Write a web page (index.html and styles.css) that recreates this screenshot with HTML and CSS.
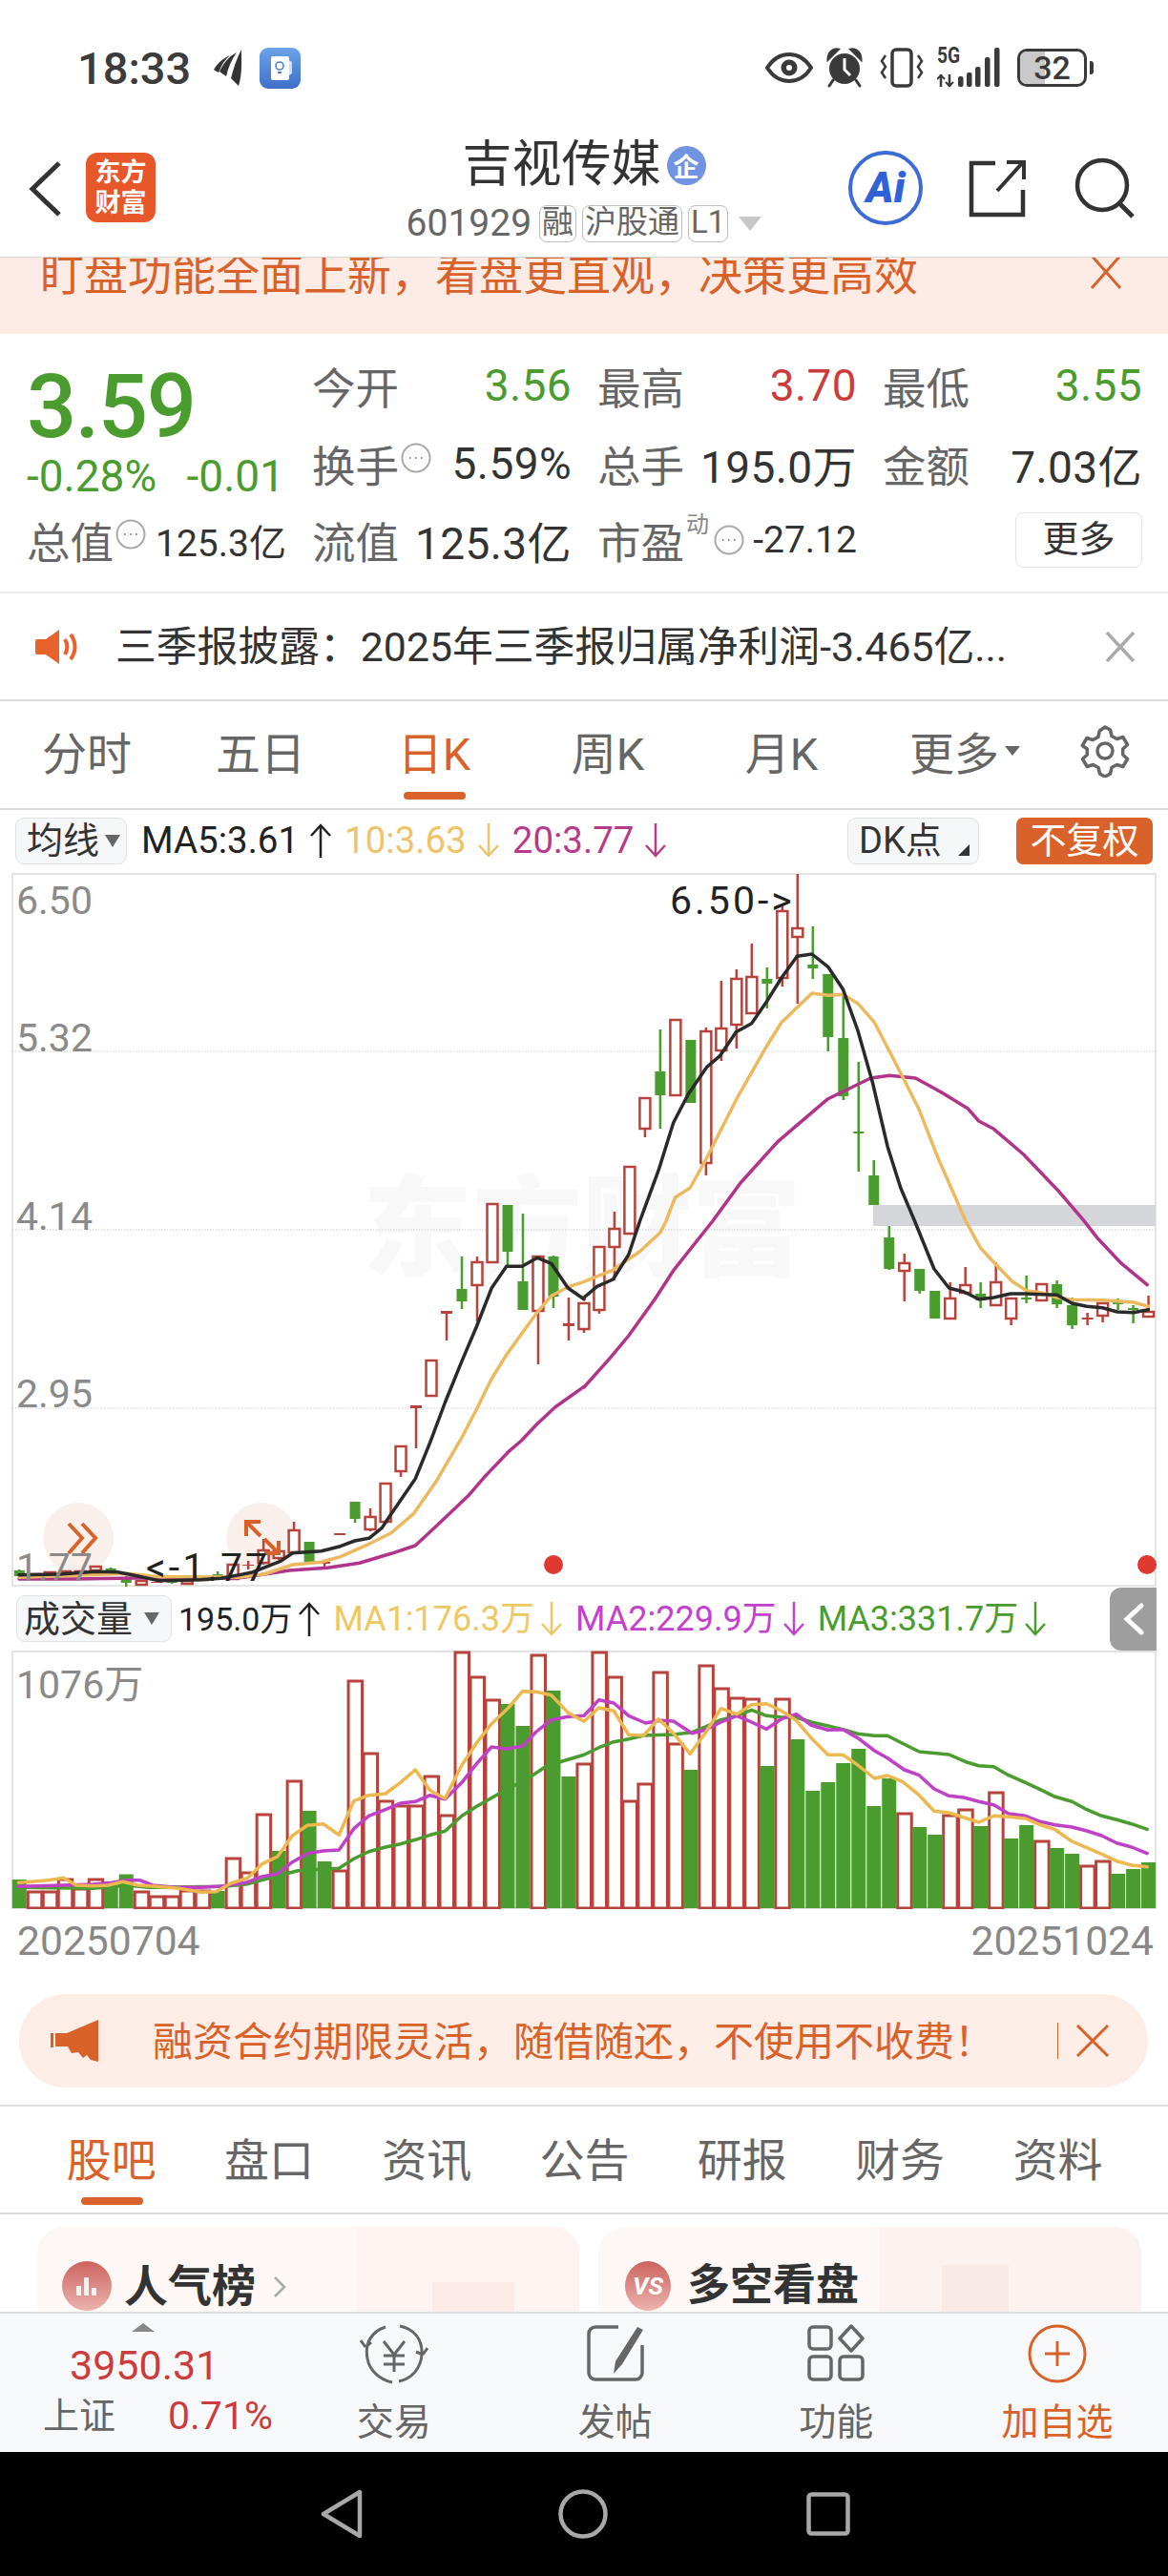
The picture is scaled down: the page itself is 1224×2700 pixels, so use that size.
FILE: index.html
```html
<!DOCTYPE html>
<html lang="zh-CN">
<head>
<meta charset="utf-8">
<title>吉视传媒</title>
<link rel="stylesheet" href="styles.css">
</head>
<body>
<div class="page">
  <header class="status">
    <div class="status-left">
      <span class="time">18:33</span>
      <svg class="ic-plane" viewBox="0 0 30 38"><path d="M29 0C29 12 30 26 26 38L18 30C21 19 24 9 29 0ZM24 3C19 10 15 19 13 28L6 23C10 14 16 7 24 3ZM17 6C10 9 4 14 0 21L5 24C8 16 12 10 17 6Z" fill="#333"/></svg>
      <svg class="ic-app" viewBox="0 0 43 43"><defs><linearGradient id="appg" x1="0" y1="0" x2="0" y2="1"><stop offset="0" stop-color="#6ba3ea"/><stop offset="1" stop-color="#3f6fc9"/></linearGradient></defs><rect width="43" height="43" rx="9" fill="url(#appg)"/><rect x="12" y="9" width="19" height="25" rx="2" fill="#fff"/><circle cx="21" cy="19" r="4" fill="none" stroke="#4a7fd2" stroke-width="1.6"/><path d="M19 26h4" stroke="#4a7fd2" stroke-width="2"/><path d="M31 13l3 2v12l-3 2z" fill="#cfe0f8"/></svg>
    </div>
    <div class="status-right">
      <svg class="ic-eye" viewBox="0 0 50 32"><path d="M2 16C9 5 17 2 25 2s16 3 23 14C41 27 33 30 25 30S9 27 2 16Z" fill="none" stroke="#3a3a3a" stroke-width="4"/><circle cx="25" cy="16" r="8.5" fill="#3a3a3a"/><circle cx="25" cy="16" r="3" fill="#fff"/></svg>
      <svg class="ic-alarm" viewBox="0 0 40 42"><circle cx="20" cy="22" r="16" fill="#3a3a3a"/><path d="M3 12C3 5 8 1 13 2ZM37 12C37 5 32 1 27 2ZM8 34l-4 6M32 34l4 6" fill="#3a3a3a" stroke="#3a3a3a" stroke-width="3" stroke-linecap="round"/><path d="M20 11v12l6 6" fill="none" stroke="#fff" stroke-width="3"/></svg>
      <svg class="ic-vib" viewBox="0 0 46 42"><rect x="13" y="2" width="20" height="38" rx="4" fill="none" stroke="#3a3a3a" stroke-width="3.5"/><path d="M6 8l-4 6 4 6-4 6 4 6M40 8l4 6-4 6 4 6-4 6" fill="none" stroke="#3a3a3a" stroke-width="2.5"/></svg>
      <div class="signal"><span class="five-g">5G</span><svg class="ic-bars" viewBox="0 0 68 42"><path d="M4 28v13M13 28v13" stroke="#3a3a3a" stroke-width="2.5"/><path d="M0 33l4-4 4 4M9 36l4 4 4-4" fill="none" stroke="#3a3a3a" stroke-width="2"/><rect x="22" y="30" width="5.500" height="11" rx="2" fill="#3a3a3a"/><rect x="31" y="26" width="5.500" height="15" rx="2" fill="#3a3a3a"/><rect x="40" y="20" width="5.500" height="21" rx="2" fill="#3a3a3a"/><rect x="50" y="10" width="5.500" height="31" rx="2" fill="#3a3a3a"/><rect x="60" y="0" width="5.500" height="41" rx="2" fill="#3a3a3a"/></svg></div>
      <div class="battery"><div class="battery-body"><span class="battery-fill"></span><span class="battery-num">32</span></div><span class="battery-tip"></span></div>
    </div>
  </header>

  <nav class="topbar">
    <div class="topbar-left">
      <svg class="ic-back" viewBox="0 0 36 60"><path d="M33 3L5 30l28 27" fill="none" stroke="#333" stroke-width="5"/></svg>
      <div class="logo"><span>东方</span><span>财富</span></div>
    </div>
    <div class="title-block">
      <div class="title-row"><span class="title">吉视传媒</span><span class="ent-badge">企</span></div>
      <div class="sub-row"><span class="code">601929</span><span class="tag">融</span><span class="tag">沪股通</span><span class="tag">L1</span><span class="tag-arrow"></span></div>
    </div>
    <div class="topbar-right">
      <div class="ai-btn"><span class="ai-text">Ai</span></div>
      <svg class="ic-share" viewBox="0 0 62 62"><path d="M28 5H3v54h54V33" fill="none" stroke="#333" stroke-width="4.5"/><path d="M30 34L57 4M40 4h18v18" fill="none" stroke="#333" stroke-width="4"/></svg>
      <svg class="ic-search" viewBox="0 0 64 64"><circle cx="29" cy="29" r="26" fill="none" stroke="#333" stroke-width="4.5"/><path d="M47 48l14 14" stroke="#333" stroke-width="5"/></svg>
    </div>
  </nav>

  <section class="promo">
    <span class="promo-text">盯盘功能全面上新，看盘更直观，决策更高效</span>
    <svg class="promo-x" viewBox="0 0 34 36"><path d="M2 0l30 34M32 0L2 34" stroke="#d9622b" stroke-width="3"/></svg>
  </section>

  <section class="quote">
    <div class="q-price">3.59</div>
    <div class="q-cell"><span class="lbl">今开</span><span class="val green">3.56</span></div>
    <div class="q-cell"><span class="lbl">最高</span><span class="val red">3.70</span></div>
    <div class="q-cell"><span class="lbl">最低</span><span class="val green">3.55</span></div>
    <div class="q-change"><span>-0.28%</span><span>-0.01</span></div>
    <div class="q-cell"><span class="lbl">换手<svg class="dots" viewBox="0 0 32 32"><circle cx="16" cy="16" r="14.5" fill="none" stroke="#aaa" stroke-width="2"/><path d="M9 16h1.5M15 16h1.5M21 16h1.5" stroke="#888" stroke-width="2"/></svg></span><span class="val">5.59%</span></div>
    <div class="q-cell"><span class="lbl">总手</span><span class="val">195.0万</span></div>
    <div class="q-cell"><span class="lbl">金额</span><span class="val">7.03亿</span></div>
    <div class="q-cell"><span class="lbl">总值<svg class="dots" viewBox="0 0 32 32"><circle cx="16" cy="16" r="14.5" fill="none" stroke="#aaa" stroke-width="2"/><path d="M9 16h1.5M15 16h1.5M21 16h1.5" stroke="#888" stroke-width="2"/></svg></span><span class="val small">125.3亿</span></div>
    <div class="q-cell"><span class="lbl">流值</span><span class="val">125.3亿</span></div>
    <div class="q-cell"><span class="lbl">市盈<sup class="dyn">动</sup><svg class="dots dots-pe" viewBox="0 0 32 32"><circle cx="16" cy="16" r="14.5" fill="none" stroke="#aaa" stroke-width="2"/><path d="M9 16h1.5M15 16h1.5M21 16h1.5" stroke="#888" stroke-width="2"/></svg></span><span class="val small">-27.12</span></div>
    <div class="q-more"><span class="more-btn">更多</span></div>
  </section>

  <section class="news">
    <svg class="ic-speaker" viewBox="0 0 48 38"><path d="M2 11h9L25 1v36L11 27H2a2 2 0 0 1-2-2V13a2 2 0 0 1 2-2Z" fill="#e8632b"/><path d="M31 11c3 5 3 11 0 16M37 6c6 8 6 18 0 26" fill="none" stroke="#e8632b" stroke-width="4"/></svg>
    <span class="news-text">三季报披露：2025年三季报归属净利润-3.465亿...</span>
    <svg class="news-x" viewBox="0 0 32 32"><path d="M2 1l28 30M30 1L2 31" stroke="#aaa" stroke-width="3.5"/></svg>
  </section>

  <section class="ktabs">
    <span class="ktab">分时</span><span class="ktab">五日</span><span class="ktab active">日K</span><span class="ktab">周K</span><span class="ktab">月K</span>
    <span class="ktab ktab-more">更多<i class="tab-caret"></i></span>
    <span class="ktab"><svg class="ic-gear" viewBox="0 0 56 56"><path d="M28 3l5.500 3 1.500 6.500 5.500 3 6.300-2 4.700 8-4.800 4.500v6l4.800 4.500-4.700 8-6.300-2-5.500 3-1.500 6.500-5.500 3-5.500-3-1.500-6.500-5.500-3-6.300 2-4.700-8 4.800-4.500v-6L4.300 22.500l4.700-8 6.300 2 5.500-3 1.500-6.500z" fill="none" stroke="#666" stroke-width="3.500" stroke-linejoin="round"/><circle cx="28" cy="28" r="8" fill="none" stroke="#666" stroke-width="3.500"/></svg></span>
  </section>

  <section class="ma-row">
    <span class="select ma-select">均线<i class="sel-caret"></i></span>
    <span class="ma ma-black">MA5:3.61<svg class="arrow" viewBox="0 0 24 36"><path d="M12 36V2M2 13L12 2l10 11"/></svg></span>
    <span class="ma ma-yellow">10:3.63<svg class="arrow" viewBox="0 0 24 36"><path d="M12 0v34M2 23l10 11 10-11"/></svg></span>
    <span class="ma ma-pink">20:3.77<svg class="arrow" viewBox="0 0 24 36"><path d="M12 0v34M2 23l10 11 10-11"/></svg></span>
    <span class="select dk-select">DK点<i class="dk-corner"></i></span>
    <span class="unadjust">不复权</span>
  </section>

  <section class="price-chart">
    <div class="watermark">东方财富</div>
    <svg class="chart-svg" viewBox="12 915 1200 748" preserveAspectRatio="none">
      <rect x="915" y="1263" width="296" height="22" fill="#d5d6da"/>
      <g stroke="#cfcfcf" stroke-width="1" stroke-dasharray="1.500 1.500"><path d="M13 1102H1211M13 1289H1211M13 1476H1211"/></g>
      <circle cx="82" cy="1612" r="37" fill="#faf0eb"/>
      <circle cx="274" cy="1612" r="37" fill="#faf0eb"/>
      <g id="candles"></g>
      <g id="price-lines"></g>
      <g fill="none" stroke="#d9622b" stroke-width="4">
        <path d="M72 1597l14 15-14 16M86 1597l14 15-14 16"/>
        <path d="M273 1595h-15v15M258 1595l15 15M292 1615v13h-15M277 1613l15 15"/>
      </g>
      <circle cx="580" cy="1640" r="10" fill="#e0392f"/>
      <circle cx="1202" cy="1640" r="10" fill="#e0392f"/>
    </svg>
    <span class="axis ax1">6.50</span>
    <span class="axis ax2">5.32</span>
    <span class="axis ax3">4.14</span>
    <span class="axis ax4">2.95</span>
    <span class="axis ax5">1.77</span>
    <span class="mark mark-high">6.50-&gt;</span>
    <span class="mark mark-low">&lt;-1.77</span>
  </section>

  <section class="vol-row">
    <span class="select vol-select">成交量<i class="sel-caret"></i></span>
    <span class="ma ma-black">195.0万<svg class="arrow" viewBox="0 0 24 36"><path d="M12 36V2M2 13L12 2l10 11"/></svg></span>
    <span class="ma ma1">MA1:176.3万<svg class="arrow" viewBox="0 0 24 36"><path d="M12 0v34M2 23l10 11 10-11"/></svg></span>
    <span class="ma ma2">MA2:229.9万<svg class="arrow" viewBox="0 0 24 36"><path d="M12 0v34M2 23l10 11 10-11"/></svg></span>
    <span class="ma ma3">MA3:331.7万<svg class="arrow" viewBox="0 0 24 36"><path d="M12 0v34M2 23l10 11 10-11"/></svg></span>
    <div class="side-tab"><svg viewBox="0 0 24 36"><path d="M20 4L5 18l15 14" fill="none" stroke="#fff" stroke-width="5" stroke-linecap="round"/></svg></div>
  </section>

  <section class="vol-chart">
    <svg class="chart-svg" viewBox="12 1730 1200 271" preserveAspectRatio="none">
      <g id="vol-bars"></g>
      <g id="vol-lines"></g>
    </svg>
    <span class="axis vol-max">1076万</span>
  </section>

  <section class="dates"><span>20250704</span><span>20251024</span></section>

  <section class="pill-wrap">
    <div class="pill">
      <svg class="ic-horn" viewBox="0 0 50 44"><path d="M50 0v44l-8-2-4-5-4 3-5-6-7 1-4-7H5V14h12Z" fill="#d9622b"/><rect x="0" y="14" width="3" height="15" fill="#d9622b"/></svg>
      <span class="pill-text">融资合约期限灵活，随借随还，不使用不收费！</span>
      <i class="pill-sep"></i>
      <svg class="pill-x" viewBox="0 0 36 34"><path d="M2 1l32 32M34 1L2 33" stroke="#d9622b" stroke-width="3"/></svg>
    </div>
  </section>

  <section class="subtabs">
    <span class="subtab active">股吧</span><span class="subtab">盘口</span><span class="subtab">资讯</span><span class="subtab">公告</span><span class="subtab">研报</span><span class="subtab">财务</span><span class="subtab">资料</span>
  </section>

  <section class="cards">
    <div class="card card-a">
      <span class="card-ic"><svg viewBox="0 0 28 24"><path d="M3 22V12h5v10zM11 22V3h5v19zM19 22v-8h5v8z" fill="#fff" fill-opacity=".85"/></svg></span>
      <span class="card-title">人气榜</span>
      <svg class="card-arrow" viewBox="0 0 14 24"><path d="M2 2l10 10L2 22" fill="none" stroke="#aaa" stroke-width="2.500"/></svg>
    </div>
    <div class="card card-b">
      <span class="card-ic vs">VS</span>
      <span class="card-title">多空看盘</span>
    </div>
  </section>

  <footer class="bottombar">
    <div class="index-cell">
      <i class="index-caret"></i>
      <span class="index-val">3950.31</span>
      <div class="index-row"><span class="index-name">上证</span><span class="index-pct">0.71%</span></div>
    </div>
    <div class="btab">
      <svg class="btab-ic" viewBox="0 0 72 64"><path d="M27 3C12 8 5 20 8 36c2 12 12 22 26 25M6 24L1 17M6 24l6-5M42 2c15 3 24 14 23 30-1 14-10 25-24 28M66 32l5-7M66 32l-7-3" fill="none" stroke="#666" stroke-width="3"/><path d="M25 18l11 14 11-14M36 32v18M25 33h22M25 42h22" fill="none" stroke="#666" stroke-width="3"/></svg>
      <span>交易</span>
    </div>
    <div class="btab">
      <svg class="btab-ic" viewBox="0 0 60 60"><path d="M33 3H9a7 7 0 0 0-7 7v41a7 7 0 0 0 7 7h42a7 7 0 0 0 7-7V22" fill="none" stroke="#666" stroke-width="3.500"/><path d="M53 3l6 3-22 36-9 10 2-13z" fill="#666"/></svg>
      <span>发帖</span>
    </div>
    <div class="btab">
      <svg class="btab-ic" viewBox="0 0 60 60"><rect x="2" y="3" width="23" height="23" rx="4" fill="none" stroke="#666" stroke-width="3.500"/><rect x="2" y="34" width="23" height="24" rx="4" fill="none" stroke="#666" stroke-width="3.500"/><rect x="34" y="34" width="24" height="24" rx="4" fill="none" stroke="#666" stroke-width="3.500"/><path d="M46 2l12 13-12 13-12-13z" fill="none" stroke="#666" stroke-width="3.500" stroke-linejoin="round"/></svg>
      <span>功能</span>
    </div>
    <div class="btab btab-add">
      <svg class="btab-ic" viewBox="0 0 62 62"><circle cx="31" cy="31" r="29" fill="none" stroke="#d9622b" stroke-width="3"/><path d="M31 18v26M18 31h26" stroke="#d9622b" stroke-width="3"/></svg>
      <span>加自选</span>
    </div>
  </footer>

  <div class="sysnav">
    <svg class="sys-back" viewBox="0 0 46 52"><path d="M42 3v46L4 26z" fill="none" stroke="#a8a8a8" stroke-width="4.500" stroke-linejoin="round"/></svg>
    <svg class="sys-home" viewBox="0 0 52 52"><circle cx="26" cy="26" r="23.500" fill="none" stroke="#a8a8a8" stroke-width="4.500"/></svg>
    <svg class="sys-recent" viewBox="0 0 46 46"><rect x="2.500" y="2.500" width="41" height="41" rx="3" fill="none" stroke="#a8a8a8" stroke-width="4.500"/></svg>
  </div>
</div>
<script src="chart.js"></script>
</body>
</html>
```

FILE: styles.css
```css
* { box-sizing: border-box; }
html, body { margin: 0; padding: 0; background: #fff; }
body { font-family: Roboto, "Noto Sans CJK SC", sans-serif; color: #333; }
i { font-style: normal; }
svg { display: block; flex: none; }
.page { width: 1224px; height: 2700px; overflow: hidden; display: flex; flex-direction: column; }
.page > * { flex: none; }

/* status bar */
.status { height: 142px; padding: 0 78px 0 81px; display: flex; align-items: center; justify-content: space-between; }
.status-left, .status-right { display: flex; align-items: center; }
.time { font-size: 47px; font-weight: 500; color: #3c3c3c; }
.ic-plane { width: 30px; height: 38px; margin-left: 24px; }
.ic-app { width: 43px; height: 43px; margin-left: 18px; }
.ic-eye { width: 50px; height: 32px; }
.ic-alarm { width: 40px; height: 42px; margin-left: 13px; }
.ic-vib { width: 46px; height: 42px; margin-left: 17px; }
.signal { position: relative; width: 68px; height: 42px; margin-left: 14px; }
.five-g { position: absolute; left: 0; top: -4px; font-size: 24px; font-weight: 700; line-height: 24px; color: #3a3a3a; transform: scaleX(.8); transform-origin: left; }
.ic-bars { width: 68px; height: 42px; }
.battery { display: flex; align-items: center; margin-left: 16px; }
.battery-body { position: relative; width: 73px; height: 40px; border: 3.500px solid #3a3a3a; border-radius: 10px; overflow: hidden; display: flex; align-items: center; justify-content: center; }
.battery-fill { position: absolute; left: 0; top: 0; bottom: 0; width: 26px; background: #c9c9c9; }
.battery-num { position: relative; font-size: 34px; font-weight: 500; color: #3a3a3a; }
.battery-tip { width: 4px; height: 14px; margin-left: 3px; background: #3a3a3a; border-radius: 0 3px 3px 0; }

/* nav */
.topbar { height: 128px; border-bottom: 1px solid #d8d8d8; display: grid; grid-template-columns: 1fr auto 1fr; position: relative; }
.topbar-left { display: flex; align-items: flex-start; padding: 18px 0 0 29px; }
.ic-back { width: 36px; height: 60px; margin-top: 8px; }
.logo { width: 73px; height: 73px; margin-left: 25px; background: #e8572a; border-radius: 12px; color: #fff; font-size: 27px; font-weight: 700; line-height: 32px; display: flex; flex-direction: column; align-items: center; justify-content: center; }
.title-block { display: flex; flex-direction: column; align-items: center; padding-top: 2px; }
.title-row { display: flex; align-items: center; height: 58px; }
.title { font-size: 52px; line-height: 58px; color: #333; }
.ent-badge { width: 41px; height: 41px; margin-left: 6px; border-radius: 50%; background: #7093e2; color: #fff; font-size: 27px; font-weight: 700; display: flex; align-items: center; justify-content: center; }
.sub-row { display: flex; align-items: center; height: 40px; margin-top: 12px; }
.code { font-size: 39px; line-height: 40px; color: #666; margin-right: 8px; }
.tag { height: 39px; padding: 0 2px; margin-right: 6px; border: 1.500px solid #bdbdbd; border-radius: 8px; font-size: 33px; line-height: 34px; color: #666; }
.tag-arrow { width: 0; height: 0; margin: 0 0 0 5px; border-left: 12px solid transparent; border-right: 12px solid transparent; border-top: 15px solid #c8c8c8; }
.topbar-right { display: flex; align-items: flex-start; justify-content: flex-end; padding: 16px 34px 0 0; }
.ai-btn { width: 78px; height: 78px; border: 4px solid #3c6bd8; border-radius: 50%; display: flex; align-items: center; justify-content: center; }
.ai-text { font-size: 44px; font-weight: 900; font-style: italic; color: #2f62d6; }
.ic-share { width: 62px; height: 62px; margin: 8px 0 0 48px; }
.ic-search { width: 64px; height: 64px; margin: 7px 0 0 49px; }

/* promo */
.promo { height: 80px; background: #fcece5; overflow: hidden; position: relative; display: flex; align-items: flex-start; justify-content: space-between; padding: 0 48px 0 42px; }
.promo-text { font-size: 46px; line-height: 36px; color: #d9622b; }
.promo-x { width: 34px; height: 36px; margin-top: -2px; }

/* quote */
.quote { height: 272px; border-bottom: 2px solid #ececec; padding: 14px 27px 0 28px; display: grid; grid-template-columns: 272px 272px 272px 272px; column-gap: 27px; grid-template-rows: 80px 84px 76px; }
.q-cell { display: flex; align-items: center; justify-content: space-between; white-space: nowrap; }
.q-price { font-size: 92px; font-weight: 500; line-height: 80px; color: #4a9c2f; padding-top: 23px; letter-spacing: -1.500px; }
.q-change { display: flex; justify-content: space-between; align-items: center; padding: 26px 2px 0 0; font-size: 46px; color: #4a9c2f; }
.lbl { font-size: 45.500px; color: #666; display: flex; align-items: center; position: relative; }
.val { font-size: 46px; letter-spacing: .4px; color: #333; }
.val.small { font-size: 39px; letter-spacing: 0; }
.green { color: #4a9c2f; }
.red { color: #cc3c3c; }
.dots { width: 32px; height: 32px; margin: -12px 0 0 2px; }
.dots-pe { margin-top: 0; }
.dyn { font-size: 24px; line-height: 24px; color: #888; margin: -32px 3px 0 2px; }
.q-more { display: flex; justify-content: flex-end; align-items: center; }
.more-btn { width: 133px; height: 58px; border: 1.500px solid #e5e5e5; border-radius: 8px; font-size: 38px; line-height: 54px; text-align: center; color: #333; }

/* news */
.news { height: 113px; border-bottom: 2px solid #dedede; padding: 0 34px 0 37px; display: flex; align-items: center; }
.ic-speaker { width: 48px; height: 38px; }
.news-text { flex: 1; margin-left: 36px; padding-bottom: 7px; font-size: 42.800px; color: #333; white-space: nowrap; }
.news-x { width: 32px; height: 32px; }

/* kline tabs */
.ktabs { height: 114px; border-bottom: 2px solid #dedede; display: grid; grid-template-columns: repeat(6, 182px) 132px; }
.ktab { display: flex; align-items: center; justify-content: center; height: 112px; padding-bottom: 9px; font-size: 47px; color: #666; position: relative; }
.ktab.active { color: #d9622b; }
.ktab.active::after { content: ""; position: absolute; left: 59px; width: 65px; bottom: 9px; height: 8px; border-radius: 4px; background: #d9622b; }
.ktab-more { padding-left: 20px; }
.tab-caret { width: 0; height: 0; margin-left: 6px; border-left: 8px solid transparent; border-right: 8px solid transparent; border-top: 10px solid #666; }
.ic-gear { width: 56px; height: 56px; }

/* legend rows */
.ma-row, .vol-row { display: flex; align-items: center; position: relative; white-space: nowrap; }
.ma-row { height: 66px; padding: 0 16px 2px 16px; }
.vol-row { height: 67px; padding: 0 16px 0 17px; }
.select { height: 49px; border: 1.500px solid #e2e2e2; border-radius: 9px; background: #f6f7f9; font-size: 38px; line-height: 44px; color: #333; display: flex; align-items: center; }
.ma-select { width: 117px; padding-left: 11px; }
.vol-select { width: 163px; padding-left: 7px; }
.sel-caret { width: 0; height: 0; margin-left: 6px; border-left: 8px solid transparent; border-right: 8px solid transparent; border-top: 13px solid #666; }
.vol-select .sel-caret { margin-left: 12px; }
.ma { font-size: 38.500px; line-height: 48px; display: flex; align-items: center; }
.arrow { width: 24px; height: 36px; margin-left: 11px; fill: none; stroke: currentColor; stroke-width: 2.500; }
.ma-black { color: #222; margin-left: 15px; }
.ma-row .ma-yellow { color: #eec36a; margin-left: 13px; }
.ma-row .ma-pink { color: #b83a8c; margin-left: 13px; }
.dk-select { width: 138px; margin-left: auto; padding-left: 11px; position: relative; }
.dk-corner { position: absolute; right: 9px; bottom: 8px; width: 0; height: 0; border-left: 12px solid transparent; border-bottom: 12px solid #333; }
.unadjust { width: 143px; height: 49px; margin-left: 39px; border-radius: 7px; background: #d9622b; color: #fff; font-size: 38px; line-height: 48px; text-align: center; }
.vol-row .ma { font-size: 36px; }
.vol-row .arrow { margin-left: 6px; }
.vol-row .ma-black { margin-left: 7px; font-size: 34px; }
.ma1 { color: #eec864; margin-left: 13px; }
.ma2 { color: #c441cf; margin-left: 13px; }
.ma3 { color: #4a9c2f; margin-left: 13px; }
.side-tab { position: absolute; left: 1163px; top: 1px; width: 49px; height: 66px; background: #9e9e9e; border-radius: 12px 0 0 12px; display: flex; align-items: center; justify-content: center; }
.side-tab svg { width: 24px; height: 36px; }

/* charts */
.price-chart, .vol-chart { position: relative; margin-left: 12px; width: 1200px; border: 2px solid #e2e2e2; }
.price-chart { height: 748px; border-color: #e4e4e4; }
.vol-chart { height: 271px; border-bottom-color: #dcdcdc; }
.chart-svg { position: absolute; left: -2px; top: -2px; width: 1200px; }
.price-chart .chart-svg { height: 748px; }
.vol-chart .chart-svg { height: 271px; }
.watermark { position: absolute; left: 366px; top: 307px; font-size: 115px; line-height: 130px; font-weight: 900; color: #f8f8f8; white-space: nowrap; }
.axis { position: absolute; left: 3px; font-size: 41px; line-height: 40px; color: #8a8a8a; }
.ax1 { top: 7px; }
.ax2 { top: 151px; }
.ax3 { top: 338px; }
.ax4 { top: 524px; }
.ax5 { top: 708px; line-height: 36px; }
.mark { position: absolute; font-size: 41px; line-height: 40px; color: #222; letter-spacing: 3px; }
.mark-high { left: 688px; top: 7px; }
.mark-low { left: 139px; top: 708px; line-height: 36px; }
.vol-max { top: 14px; }

.dates { height: 69px; padding: 0 15px 4px 18px; display: flex; align-items: center; justify-content: space-between; font-size: 42.600px; color: #888; }

/* pill */
.pill-wrap { height: 138px; border-bottom: 2px solid #dedede; padding: 20px 21px 0 20px; }
.pill { height: 98px; border-radius: 49px; background: #fcede6; display: flex; align-items: center; padding: 0 40px 0 33px; }
.ic-horn { width: 50px; height: 44px; }
.pill-text { margin-left: 57px; padding-bottom: 5px; font-size: 42px; color: #d9622b; white-space: nowrap; flex: 1; }
.pill-sep { width: 1px; height: 38px; background: #d9622b; margin-right: 18px; }
.pill-x { width: 36px; height: 34px; }

/* sub tabs */
.subtabs { height: 113px; border-bottom: 2px solid #dedede; padding: 0 34px; display: grid; grid-template-columns: repeat(7, 165.300px); }
.subtab { display: flex; align-items: center; justify-content: center; height: 111px; padding-bottom: 6px; font-size: 47px; color: #666; position: relative; }
.subtab.active { color: #d9622b; }
.subtab.active::after { content: ""; position: absolute; left: 51px; width: 65px; bottom: 8px; height: 8px; border-radius: 4px; background: #d9622b; }

/* cards */
.cards { height: 102px; padding: 13px 28px 0 39px; display: grid; grid-template-columns: 568px 569px; column-gap: 20px; overflow: hidden; }
.card { height: 130px; border-radius: 28px; display: flex; align-items: flex-start; padding: 36px 0 0 26px; position: relative; overflow: hidden; background: #fdf8f6; }
.card > * { position: relative; }
.card::before { content: ""; position: absolute; left: 336px; top: 0; width: 232px; height: 130px; background: #fdf4f1; }
.card::after { content: ""; position: absolute; left: 414px; top: 58px; width: 86px; height: 80px; background: #fbeae6; }
.card-b { padding-left: 28px; }
.card-b::before { left: 294px; width: 275px; background: #fcf2ef; }
.card-b::after { left: 360px; top: 40px; width: 70px; height: 90px; background: #faeae6; }
.card-ic { width: 52px; height: 52px; border-radius: 50%; background: linear-gradient(180deg, #cc6360, #ecb3ad); display: flex; align-items: center; justify-content: center; color: #fff; font-size: 26px; font-weight: 700; }
.card-ic svg { width: 28px; height: 24px; }
.card-ic.vs { width: 48px; height: 52px; font-style: italic; }
.card-title { margin-left: 13px; font-size: 46px; line-height: 52px; font-weight: 700; color: #333; }
.card-b .card-title { margin-left: 17px; font-size: 45px; }
.card-arrow { width: 14px; height: 24px; margin: 15px 0 0 18px; }

/* bottom bar */
.bottombar { height: 147px; background: #f7f8fa; border-top: 2px solid #dedede; display: grid; grid-template-columns: 297px repeat(4, 1fr); }
.index-cell { position: relative; display: flex; flex-direction: column; padding: 32px 0 0 45px; }
.index-caret { position: absolute; left: 138px; top: 10px; width: 0; height: 0; border-left: 12px solid transparent; border-right: 12px solid transparent; border-bottom: 9px solid #888; }
.index-val { font-size: 43px; line-height: 44px; color: #cc3c3c; padding-left: 28px; }
.index-row { display: flex; align-items: center; margin-top: 8px; }
.index-name { font-size: 38px; line-height: 46px; color: #666; }
.index-pct { margin-left: 55px; font-size: 41px; line-height: 46px; color: #cc3c3c; }
.btab { display: flex; flex-direction: column; align-items: center; padding-top: 11px; font-size: 39px; line-height: 46px; color: #666; }
.btab-ic { width: 60px; height: 60px; margin-bottom: 20px; }
.btab:nth-child(2) .btab-ic { width: 72px; height: 64px; margin-bottom: 16px; }
.btab-add { color: #d9622b; }
.btab-add .btab-ic { width: 62px; height: 62px; margin-bottom: 18px; }

/* system nav */
.sysnav { height: 130px; background: #000; position: relative; display: flex; align-items: center; padding: 0 0 0 335px; }
.sys-back { width: 46px; height: 52px; }
.sys-home { width: 52px; height: 52px; margin-left: 204px; }
.sys-recent { width: 46px; height: 46px; margin-left: 208px; }
```

FILE: chart.js
```js
var NS = 'http://www.w3.org/2000/svg';
var RED = '#b8423c', GREEN = '#4a9c2f';
function cx(i) { return 20.3 + 15.99 * i; }
function el(parent, name, attrs) {
  var n = document.createElementNS(NS, name);
  for (var k in attrs) n.setAttribute(k, attrs[k]);
  parent.appendChild(n);
  return n;
}

// [colour, bodyTop, bodyBottom, wickTop, wickBottom] in page pixels
var candles = [
  ['g',1646,1652,1645,1653],['r',1650,1652,1650,1652],['r',1648,1652,1648,1652],['r',1647,1650,1647,1651],
  ['r',1647,1650,1646,1651],['r',1642,1646,1642,1646],['g',1644,1647,1643,1648],['g',1653,1659,1652,1663],
  ['r',1657,1661,1657,1661],['d',1658,1659,1658,1659],['g',1657,1659,1656,1660],['r',1657,1660,1657,1660],
  ['r',1655,1656,1655,1656],['g',1650,1653,1647,1654],['r',1640,1655,1640,1655],['d',1640,1641,1636,1645],
  ['r',1625,1638,1613,1640],['r',1626,1633,1615,1635],['r',1604,1627,1595,1627],['g',1616,1637,1616,1640],
  ['d',1637,1639,1635,1642],['d',1607,1609,1607,1609],['g',1574,1592,1574,1596],['r',1590,1603,1581,1605],
  ['r',1555,1595,1555,1596],['r',1516,1542,1516,1548],['d',1473,1476,1473,1518],['r',1426,1463,1426,1463],
  ['d',1374,1377,1374,1405],['g',1351,1364,1317,1372],['r',1323,1347,1317,1385],['r',1262,1323,1262,1323],
  ['g',1263,1312,1263,1327],['g',1343,1373,1272,1373],['r',1317,1374,1316,1430],['g',1317,1359,1316,1371],
  ['d',1387,1390,1360,1405],['r',1366,1393,1366,1397],['r',1307,1373,1307,1377],['r',1288,1307,1270,1342],
  ['r',1223,1293,1223,1293],['r',1151,1183,1151,1192],['g',1123,1148,1079,1183],['r',1069,1148,1069,1148],
  ['g',1090,1156,1090,1156],['r',1081,1219,1077,1232],['r',1078,1101,1028,1112],['r',1026,1074,1016,1099],
  ['r',1024,1062,989,1063],['g',1026,1031,1014,1057],['r',955,1025,948,1034],['r',973,982,916,1052],
  ['g',1011,1015,971,1026],['g',1021,1087,1021,1102],['g',1088,1149,1043,1153],['g',1186,1188,1113,1228],
  ['g',1232,1263,1216,1263],['g',1297,1330,1285,1331],['r',1324,1332,1314,1364],['g',1330,1353,1330,1356],
  ['g',1353,1382,1353,1382],['r',1361,1382,1344,1382],['r',1347,1355,1328,1357],['g',1356,1363,1344,1371],
  ['r',1344,1368,1323,1368],['r',1361,1382,1361,1389],['g',1360,1362,1337,1366],['r',1346,1363,1346,1363],
  ['g',1346,1367,1342,1371],['g',1368,1389,1360,1393],['d',1381,1383,1376,1389],['r',1366,1379,1366,1386],
  ['g',1365,1367,1361,1373],['g',1371,1373,1368,1387],['r',1375,1380,1358,1380]
];
var candleG = document.getElementById('candles');
candles.forEach(function (c, i) {
  var x = cx(i), green = c[0] === 'g', col = green ? GREEN : RED;
  el(candleG, 'line', { x1: x, x2: x, y1: c[3], y2: c[4], stroke: col, 'stroke-width': 2.5 });
  var h = c[2] - c[1];
  if (c[0] === 'd') {
    el(candleG, 'rect', { x: x - 6, y: c[1], width: 12, height: h, fill: col });
  } else if (green) {
    el(candleG, 'rect', { x: x - 5.5, y: c[1], width: 11, height: h, fill: col });
  } else {
    el(candleG, 'rect', { x: x - 5.5, y: c[1], width: 11, height: h, fill: '#fff', stroke: col, 'stroke-width': 2.5 });
  }
});

// Volume: [colour, top]
var vol = [
  ['g',1970],['r',1983],['r',1983],['r',1970],['r',1980],['r',1970],['g',1977],['g',1964.5],['r',1983],['r',1988],
  ['r',1988],['r',1982],['r',1982],['g',1982],['r',1948],['r',1963],['r',1902],['g',1940],['r',1867],['g',1898],
  ['g',1951],['r',1961],['r',1762],['r',1838],['r',1888],['r',1893],['r',1893],['r',1862],['r',1903],['r',1732],
  ['r',1758],['r',1782],['g',1786],['g',1809],['r',1735],['g',1772],['g',1862],['r',1849],['r',1732],['r',1758],
  ['r',1888],['r',1870],['r',1753],['r',1828],['g',1855],['r',1746],['r',1770],['r',1780],['r',1781],['g',1851],
  ['r',1781],['g',1823],['g',1877],['g',1868],['g',1848],['g',1833],['g',1893],['g',1864],['r',1901],['g',1915],
  ['g',1923],['r',1903],['r',1897],['g',1914],['r',1879],['g',1927],['g',1913],['r',1930],['g',1937],['g',1943],
  ['r',1956],['r',1951],['g',1964],['g',1959],['g',1952]
];
var volG = document.getElementById('vol-bars');
vol.forEach(function (b, i) {
  var x = cx(i);
  if (b[0] === 'g') {
    el(volG, 'rect', { x: x - 7.5, y: b[1], width: 15, height: 2000 - b[1], fill: GREEN });
  } else {
    el(volG, 'rect', { x: x - 7, y: b[1], width: 14.5, height: 2000 - b[1], fill: '#fff', stroke: RED, 'stroke-width': 3 });
  }
});

// Moving averages: segments measured against page regions.
var A = { x: 0, y: 1200, s: 2.562, t: 3 }, B = { x: 612, y: 880, s: 2.562, t: 3 },
    C = { x: 612, y: 1280, s: 2.562, t: 3 }, D = { x: 10, y: 1560, s: 3, t: 3 },
    E = { x: 0, y: 1620, s: 2.562, t: 3 }, F = { x: 612, y: 1620, s: 2.562, t: 3 };
function pts(segments) {
  var out = [];
  segments.forEach(function (seg) {
    var r = seg[0], p = seg[1];
    for (var i = 0; i < p.length; i += 2) {
      out.push((r.x + p[i] / r.s).toFixed(1) + ',' + (r.y + p[i + 1] / r.t).toFixed(1));
    }
  });
  return out.join(' ');
}
function line(g, segments, colour, width) {
  el(g, 'polyline', { points: pts(segments), fill: 'none', stroke: colour, 'stroke-width': width, 'stroke-linejoin': 'round', 'stroke-linecap': 'round' });
}
var pl = document.getElementById('price-lines');
line(pl, [
  [D, [30,285,200,285,400,282,600,282,720,282,880,258,1000,250,1100,235,1200,205]],
  [A, [1115,1260,1170,1200,1260,1100,1300,1045,1365,965,1400,930,1440,880,1490,825,1568,760]],
  [C, [0,522,70,430,120,360,190,245,240,155,345,0]],
  [B, [420,1080,520,950,655,815,770,750,820,742,890,750,960,795,1030,845,1060,885,1100,910,1180,990,1270,1100,1340,1195]],
  [C, [1380,55,1440,130,1512,200]]
], '#b2338a', 3.5);
line(pl, [
  [D, [30,280,250,272,370,268,470,278,600,278,720,280,800,270,890,240,980,232,1040,215,1130,175,1200,140]],
  [A, [1110,1160,1170,1060,1240,920,1280,830,1320,735,1360,660,1400,595,1440,530,1480,475,1525,447,1568,430]],
  [C, [0,190,75,155,150,95,205,35,220,0]],
  [B, [245,1125,285,1095,330,1000,410,815,490,650,530,575,612,483,655,490,695,487,735,515,780,575,855,745,900,850,950,1000,1025,1200]],
  [C, [1065,85,1105,135,1150,190,1188,218,1230,225,1270,240,1310,247,1392,248,1475,255,1515,268]]
], '#edb95e', 3.5);
line(pl, [
  [D, [30,272,160,270,270,262,340,263,400,275,470,290,600,287,665,283,760,265,850,230,890,203,980,197,1040,182,1085,165,1130,157,1170,125,1200,80]],
  [A, [1115,1050,1155,935,1195,810,1240,680,1280,570,1320,450,1360,382,1402,382,1443,355,1480,373,1525,450,1568,485]],
  [C, [0,240,35,205,78,183,120,105,150,0]],
  [B, [200,1040,240,890,280,800,330,715,365,680,408,605,450,578,490,510,530,435,572,367,612,360,655,400,695,470,735,600,775,765,815,965,850,1095,888,1200]],
  [C, [940,150,980,210,1020,222,1060,245,1100,240,1145,228,1188,228,1230,230,1270,232,1310,258,1350,268,1392,272,1432,285,1475,287,1515,278]]
], '#2a2a2a', 3.5);

var vl = document.getElementById('vol-lines');
line(vl, [
  [E, [50,1075,250,1078,340,1068,400,1075,600,1072,660,1065,740,1040,800,1022,860,1018,910,1015,950,985,990,962,1035,948,1075,938,1115,925,1155,910,1195,898,1240,850,1280,820,1340,780,1380,755,1420,730,1465,695,1510,678,1568,658]],
  [F, [40,635,80,617,120,608,160,597,240,594,290,587,325,570,368,548,410,535,450,517,490,535,530,540,570,540,610,555,655,567,695,578,735,592,780,598,815,598,860,625,900,648,980,657,1025,680,1060,692,1100,695,1140,722,1185,745,1225,767,1265,790,1310,805,1350,830,1390,850,1430,862,1470,875,1512,892]]
], '#4a9c2f', 3.5);
line(vl, [
  [E, [50,1072,170,1068,250,1065,300,1060,340,1052,375,1052,410,1068,470,1075,540,1075,600,1070,660,1060,700,1042,745,1032,785,995,825,968,868,960,910,957,950,890,990,850,1035,830,1075,810,1115,805,1155,785,1195,797,1240,745,1280,685,1320,633,1360,640,1403,630,1440,585,1480,548,1525,538,1568,535]],
  [F, [40,485,80,495,120,535,165,558,205,550,240,552,290,590,325,580,368,555,410,535,450,555,490,577,530,545,570,530,610,565,655,580,695,578,735,605,780,645,815,668,860,705,900,722,940,765,980,787,1020,792,1060,805,1100,815,1140,843,1185,850,1225,868,1265,878,1310,885,1350,897,1390,912,1430,935,1470,948,1512,968]]
], '#c040c8', 3.5);
line(vl, [
  [E, [50,1060,90,1056,130,1052,170,1045,205,1068,250,1070,290,1068,330,1057,370,1068,420,1072,480,1078,540,1090,580,1088,620,1062,665,1045,705,1000,745,978,785,912,825,880,868,875,910,910,950,803,990,785,1035,780,1075,745,1115,705,1155,770,1195,795,1240,690,1280,620,1320,560,1365,510,1403,458,1440,460,1480,470,1525,525,1568,553]],
  [F, [40,510,80,520,120,595,160,597,200,545,240,590,285,655,325,590,368,512,410,530,450,500,490,497,530,520,570,550,610,605,655,658,695,658,735,690,780,732,815,723,855,742,900,785,940,835,980,840,1020,855,1060,870,1100,850,1140,853,1185,858,1225,878,1265,893,1310,930,1350,950,1390,970,1430,992,1470,1005,1512,1010]]
], '#edb94e', 3.5);
```
